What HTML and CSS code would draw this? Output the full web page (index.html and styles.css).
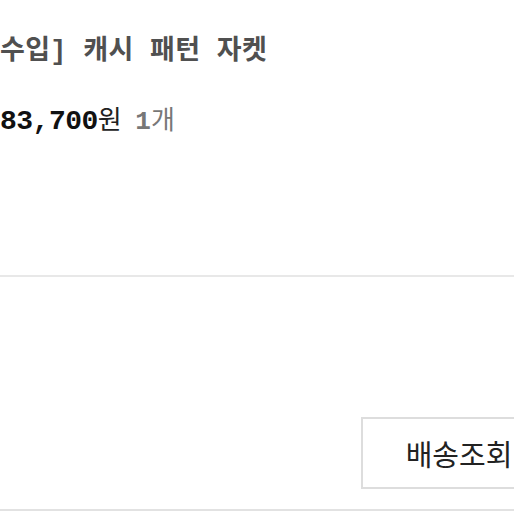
FILE: index.html
```html
<!DOCTYPE html>
<html lang="ko">
<head>
    <meta charset="UTF-8">
    <meta name="viewport" content="width=device-width, initial-scale=1.0">
    <title>주문 상세</title>
    <link rel="stylesheet" href="styles.css">
</head>
<body>
    <div class="order">
        <div class="item">
            <div class="item-name">수입] 캐시 패턴 자켓</div>
            <div class="item-price">
                <span class="amount">83,700</span><span class="won">원</span>
                <span class="qty"><b>1</b>개</span>
            </div>
        </div>

        <div class="actions">
            <button type="button" class="track-btn">배송조회</button>
        </div>
    </div>
</body>
</html>
```

FILE: styles.css
```css
html, body {
    margin: 0;
    padding: 0;
    background: #fff;
}
body {
    width: 514px;
    height: 514px;
    overflow: hidden;
    font-family: "Liberation Mono", "Noto Sans CJK KR", monospace;
}
.order {
    width: 514px;
}
.item {
    height: 277px;
    padding-top: 32px;
    box-sizing: border-box;
    border-bottom: 2px solid #e8e8e8;
}
.item-name {
    font-size: 27px;
    font-weight: bold;
    color: #505050;
    line-height: 40px;
    white-space: nowrap;
    letter-spacing: 0.3px;
}
.item-price {
    margin-top: 30px;
    line-height: 40px;
    white-space: nowrap;
}
.amount {
    font-size: 28px;
    font-weight: bold;
    color: #111;
    letter-spacing: -0.5px;
}
.won {
    font-size: 26px;
    color: #222;
}
.qty {
    font-size: 26px;
    color: #777;
    margin-left: 4px;
}
.actions {
    height: 234px;
    box-sizing: border-box;
    padding-top: 140px;
    padding-left: 361px;
    border-bottom: 2px solid #e2e2e2;
}
.track-btn {
    width: 196px;
    height: 72px;
    background: #fff;
    border: 2px solid #ddd;
    font-family: "Noto Sans CJK KR", sans-serif;
    font-size: 29px;
    color: #222;
    padding: 0;
    cursor: pointer;
}
```
